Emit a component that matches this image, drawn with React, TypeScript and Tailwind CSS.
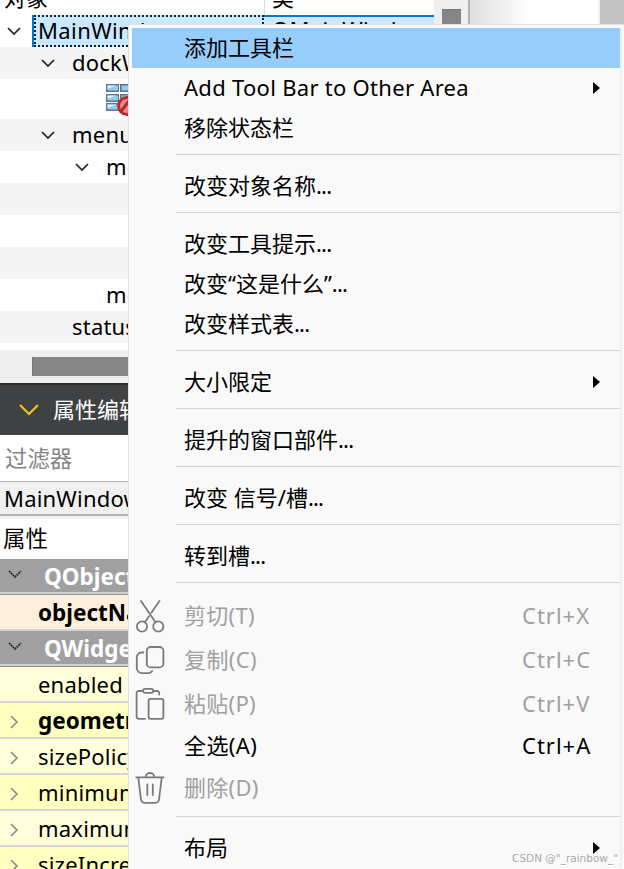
import React from "react";

const FONT = "font-['Noto_Sans','Noto_Sans_CJK_SC',sans-serif]";

function Down({ className = "", color = "#222", w = 14, sw = 1.7 }: { className?: string; color?: string; w?: number; sw?: number }) {
  return (
    <svg className={`shrink-0 ${className}`} width={w} height={w / 2 + 2} viewBox={`0 0 ${w} ${w / 2 + 2}`} fill="none" stroke={color} strokeWidth={sw}>
      <path d={`M1 1 L${w / 2} ${w / 2} L${w - 1} 1`} />
    </svg>
  );
}

function TreeRow({ h = "h-8", bg = "bg-white", pad = "", label, open }: { h?: string; bg?: string; pad?: string; label?: string; open?: boolean }) {
  return (
    <div className={`flex shrink-0 items-center ${h} ${bg} ${pad}`}>
      {open && <Down />}
      {label && <span className={`pb-0.5 tracking-[0.2px] ${open ? "ml-[17px]" : ""}`}>{label}</span>}
    </div>
  );
}

function GridIcon() {
  return (
    <svg width="24" height="34" viewBox="0 0 24 34" className="shrink-0">
      {[0, 10, 19].map((y) => (
        <g key={y}>
          <rect x="1" y={y} width="13" height="8" fill="#66708f" />
          <rect x="2.5" y={y + 1.5} width="10.500" height="5" fill="#8ecdec" />
          <path d={`M2.500 ${y + 5}V${y + 1.5}H11Z`} fill="#dff4fb" />
          <rect x="15" y={y} width="13" height="8" fill="#66708f" />
          <rect x="16.500" y={y + 1.5} width="10.500" height="5" fill="#8ecdec" />
        </g>
      ))}
      <circle cx="22" cy="22" r="8.500" fill="#e08c8b" stroke="#c02a2d" strokeWidth="3" />
      <path d="M15.500 28L24 17" stroke="#b8262a" strokeWidth="3" />
    </svg>
  );
}

function GroupRow({ label }: { label: string }) {
  return (
    <div className="flex h-9 shrink-0 items-start border-b border-[#8e8e8e] bg-[#a0a0a0] font-bold text-white">
      <div className="flex h-[35px] w-full items-center border-b-2 border-[#d0d0d0] pl-2">
        <svg width="14" height="9" viewBox="0 0 14 9" className="mb-0.5 shrink-0" fill="none" stroke="#222" strokeWidth="1.6" strokeDasharray="2 0.7">
          <path d="M1 1L7 7L13 1" />
        </svg>
        <span className="ml-[22px] pt-[3px] text-[22.5px]">{label}</span>
      </div>
    </div>
  );
}

function PropRow({ label, bg, bold, arrow = true }: { label: string; bg: string; bold?: boolean; arrow?: boolean }) {
  return (
    <div className={`flex h-9 shrink-0 items-center border-b-2 border-[#d4d4d4] ${bg} ${bold ? "text-[22.5px] font-bold" : "tracking-[0.2px]"}`}>
      <span className="flex w-[38px] shrink-0 pl-[10px] pt-[3px]">
        {arrow && (
          <svg width="8" height="14" viewBox="0 0 8 14" fill="none" stroke="#858585" strokeWidth="1.5">
            <path d="M1 1L7 7L1 13" />
          </svg>
        )}
      </span>
      <span className={bold ? "pt-0.5" : ""}>{label}</span>
    </div>
  );
}

type Item = { label: string; h?: string; selected?: boolean; sub?: boolean; disabled?: boolean; keys?: string; icon?: React.ReactNode; wide?: string };

function MenuItem({ label, h = "h-10", selected, sub, disabled, keys, icon, wide = "" }: Item) {
  const dots = label.endsWith("...");
  const text = dots ? label.slice(0, -3) : label;
  return (
    <div className={`flex shrink-0 items-center ${h} ${selected ? "bg-[#96cdfb]" : ""} ${disabled ? "text-[#a0a0a0]" : "text-black"}`}>
      <span className="flex w-[52px] shrink-0 items-center pl-[3px]">{icon}</span>
      <span className={`flex-1 pb-0.5 ${wide}`}>
        {text}
        {dots && <span className="tracking-[-0.8px]">...</span>}
      </span>
      {keys && <span className="w-[98px] pb-0.5 tracking-[1px]">{keys}</span>}
      {sub && (
        <svg width="7" height="12" viewBox="0 0 7 12" className="mr-5">
          <path d="M0 0L7 6L0 12Z" fill="#000" />
        </svg>
      )}
    </div>
  );
}

function Sep() {
  return (
    <div className="h-[18px] shrink-0 pl-11 pt-1.5">
      <div className="h-px bg-[#d3d3d3]" />
    </div>
  );
}

const stroke = { fill: "none", stroke: "#7b7b7b", strokeWidth: 1.8, strokeLinecap: "round" as const, strokeLinejoin: "round" as const };

const Cut = () => (
  <svg width="30" height="34" viewBox="0 0 30 34" {...stroke}>
    <circle cx="7" cy="27.500" r="5.1" />
    <circle cx="23.3" cy="27.500" r="5.1" />
    <path d="M6 2L20.5 23.200M24.5 2L16.5 13.500M14 17.200L9.8 23.200" />
  </svg>
);
const Copy = () => (
  <svg width="30" height="34" viewBox="0 0 30 34" {...stroke}>
    <rect x="11.8" y="4" width="16.6" height="20.4" rx="4" />
    <path d="M8.3 9.5H6.5A4.7 4.7 0 0 0 1.8 14.2V25A5.2 5.2 0 0 0 7 30.2H13A5 5 0 0 0 17.2 28" />
  </svg>
);
const Paste = () => (
  <svg width="30" height="34" viewBox="0 0 30 34" {...stroke}>
    <rect x="8" y="1.8" width="10.3" height="4" rx="2" />
    <path d="M8 4H3.8A2.2 2.2 0 0 0 1.6 6.2V29.6A2.2 2.2 0 0 0 3.8 31.800H10M18.300 4H22A2.200 2.200 0 0 1 24.200 6.200V7.500" />
    <rect x="13.6" y="11.8" width="14.8" height="20" rx="2" />
  </svg>
);
const Trash = () => (
  <svg width="30" height="34" viewBox="0 0 30 34" {...stroke}>
    <path d="M1.2 6.3H28.8M10.7 5.8A4.3 3.8 0 0 1 19.3 5.8M3.3 6.8L6 28.5Q6.4 31.8 9.5 31.8H20.5Q23.6 31.8 24 28.5L26.7 6.8M12.3 13.5V24M17.8 13.5V24" />
  </svg>
);

export default function App() {
  return (
    <div className={`relative h-[869px] w-[624px] overflow-hidden whitespace-nowrap bg-white text-[22px] leading-none text-black ${FONT}`}>
      <div className="flex h-6">
        <div className="flex w-[434px] flex-col">
          <div className="flex h-[15px] items-end overflow-hidden">
            <span className="h-[15px] w-[265px] border-r border-[#dcdcdc] pl-1">
              <span className="-mt-[15px] block leading-[24px]">对象</span>
            </span>
            <span className="h-[15px] pl-[7px]">
              <span className="-mt-[15px] block leading-[24px]">类</span>
            </span>
          </div>
        </div>
        <div className="flex w-[34px] items-end justify-start bg-[#efefef] pl-2">
          <div className="h-[15px] w-[19px] border-t border-[#777] bg-[#858585]" />
        </div>
        <div className="w-0.5 bg-[#b0b0b0]" />
        <div className="w-[60px] bg-linear-to-r from-[#dfdfdf] to-white" />
        <div className="flex-1" />
        <div className="w-[26px] border-l-2 border-[#efefef] bg-[#c1c1c1]" />
      </div>
      <div className="-mt-[9px] flex flex-col">
        <div className="flex h-8 w-[434px] items-center">
          <div className="flex w-8 shrink-0 pl-[7px]">
            <Down />
          </div>
          <div className="flex h-8 w-[232px] items-center border-l-2 border-[#0078d7] bg-[#cce8ff]">
            <div className="flex h-8 w-full items-center border-2 border-dotted border-[#123] pb-0.5 pl-0.5 tracking-[0.4px]">MainWindow</div>
          </div>
          <div className="flex h-8 flex-1 items-center border-t-2 border-[#0078d7] bg-[#cce8ff] pb-1.5 pl-2 tracking-[0.3px]">QMainWindow</div>
        </div>
        <div className="flex w-[128px] flex-col overflow-hidden">
          <TreeRow bg="bg-[#f4f4f4]" pad="pl-[41px]" open label="dockWidget" />
          <div className="flex h-10 items-center pl-[105px] pt-1">
            <GridIcon />
          </div>
          <TreeRow bg="bg-[#f4f4f4]" pad="pl-[41px]" open label="menubar" />
          <TreeRow pad="pl-[75px]" open label="menu" />
          <TreeRow bg="bg-[#f4f4f4]" />
          <TreeRow />
          <TreeRow bg="bg-[#f4f4f4]" />
          <TreeRow pad="pl-[106px]" label="menu_2" />
          <TreeRow bg="bg-[#f4f4f4]" pad="pl-[72px]" label="statusbar" />
          <div className="mt-[7px] flex h-[33px] bg-[#efefef] pl-8 pt-[7px]">
            <div className="h-[19px] w-full border-l border-[#777] bg-[#858585]" />
          </div>
          <div className="flex h-[52px] items-center border-t-2 border-[#2d2d2d] bg-[#404142] pl-[19px] text-white">
            <Down color="#f0c419" w={20} sw={2.2} />
            <span className="ml-[14px] pb-0.5">属性编辑器</span>
          </div>
          <div className="flex h-[47px] items-center border-b border-[#b4b4b4] pl-[5px] pt-0.5 text-[22.4px] text-[#848484]">过滤器</div>
          <div className="flex h-[34px] items-center border-b-2 border-[#b4b4b4] bg-[#f0f0f0] pl-1 tracking-[0.2px]">MainWindow</div>
          <div className="h-[3px] bg-[#f0f0f0]" />
          <div className="flex h-10 items-center pl-[3px] text-[22.4px]">属性</div>
          <GroupRow label="QObject" />
          <PropRow label="objectName" bg="bg-[#fff0de]" bold arrow={false} />
          <GroupRow label="QWidget" />
          <PropRow label="enabled" bg="bg-[#ffffdc]" arrow={false} />
          <PropRow label="geometry" bg="bg-[#ffffbf]" bold />
          <PropRow label="sizePolicy" bg="bg-[#ffffdc]" />
          <PropRow label="minimumSize" bg="bg-[#ffffbf]" />
          <PropRow label="maximumSize" bg="bg-[#ffffdc]" />
          <PropRow label="sizeIncrement" bg="bg-[#ffffbf]" />
        </div>
      </div>

      <div className="absolute left-[128px] top-6 flex h-[846px] w-[496px] flex-col border-l border-t border-[#e0e0e0] bg-[#f9f9f9] pl-[3px] pr-0.5 pt-[3px]">
        <div className="flex w-[490px] flex-col border-r-2 border-[#f0f0f0]">
          <MenuItem label="添加工具栏" selected />
          <MenuItem label="Add Tool Bar to Other Area" sub wide="tracking-[0.29px]" />
          <MenuItem label="移除状态栏" />
          <Sep />
          <MenuItem label="改变对象名称..." />
          <Sep />
          <MenuItem label="改变工具提示..." />
          <MenuItem label="改变“这是什么”..." />
          <MenuItem label="改变样式表..." />
          <Sep />
          <MenuItem label="大小限定" sub />
          <Sep />
          <MenuItem label="提升的窗口部件..." />
          <Sep />
          <MenuItem label="改变 信号/槽..." />
          <Sep />
          <MenuItem label="转到槽..." />
          <Sep />
          <MenuItem h="h-11" label="剪切(T)" keys="Ctrl+X" disabled icon={<Cut />} wide="tracking-[0.3px]" />
          <MenuItem h="h-11" label="复制(C)" keys="Ctrl+C" disabled icon={<Copy />} wide="tracking-[0.4px]" />
          <MenuItem h="h-11" label="粘贴(P)" keys="Ctrl+V" disabled icon={<Paste />} wide="tracking-[0.3px]" />
          <MenuItem label="全选(A)" keys="Ctrl+A" wide="tracking-[0.4px]" />
          <MenuItem h="h-11" label="删除(D)" disabled icon={<Trash />} wide="tracking-[0.3px]" />
          <Sep />
          <MenuItem label="布局" sub />
        </div>
      </div>
      <div className="absolute bottom-1 right-[6px] font-['DejaVu_Sans',sans-serif] text-[10.5px] leading-[14px] text-[#a8a8a8] [text-shadow:1px_1px_0_#fff]">CSDN @"_rainbow_"</div>
    </div>
  );
}
